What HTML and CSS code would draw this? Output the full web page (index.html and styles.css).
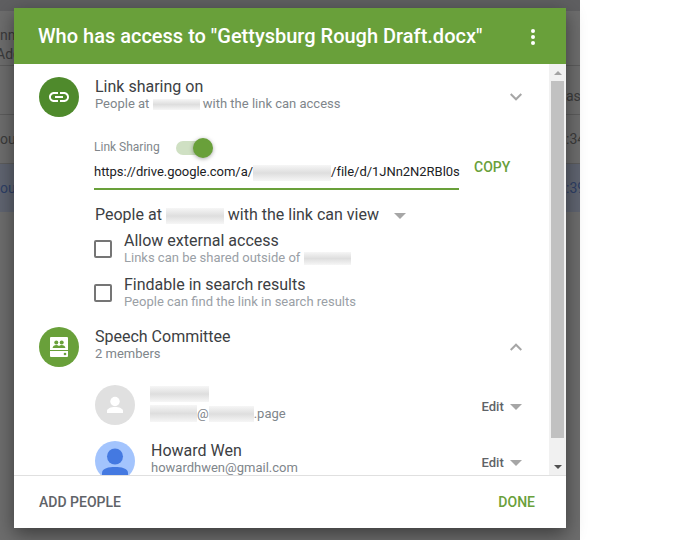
FILE: index.html
```html
<!DOCTYPE html>
<html lang="en">
<head>
    <meta charset="UTF-8">
    <title>Who has access</title>
    <link rel="stylesheet" href="styles.css">
</head>
<body>
    <div class="backdrop">
        <div class="back-top"></div>
        <div class="back-row back-first">
            <div class="back-left"><div>nnn</div><div class="back-add">Add</div></div>
        </div>
        <div class="back-row back-second">
            <div class="back-left"></div>
            <div class="back-right">as</div>
        </div>
        <div class="back-row">
            <div class="back-left">ough</div>
            <div class="back-right">:34</div>
        </div>
        <div class="back-row back-selected">
            <div class="back-left">ough</div>
            <div class="back-right">:39</div>
        </div>
    </div>

    <div class="dialog">
        <header class="dialog-head">
            <h1>Who has access to "Gettysburg Rough Draft.docx"</h1>
            <div class="dots"><i></i><i></i><i></i></div>
        </header>

        <div class="dialog-body">
            <div class="scroll-content">
                <div class="section-row">
                    <div class="avatar avatar-dark">
                        <svg width="24" height="24" viewBox="0 0 24 24" fill="#fff"><path d="M3.9 12c0-1.71 1.39-3.1 3.1-3.1h4V7H7c-2.76 0-5 2.24-5 5s2.24 5 5 5h4v-1.9H7c-1.71 0-3.1-1.39-3.1-3.1zM8 13h8v-2H8v2zm9-6h-4v1.9h4c1.71 0 3.1 1.39 3.1 3.1s-1.39 3.1-3.1 3.1h-4V17h4c2.76 0 5-2.24 5-5s-2.24-5-5-5z"/></svg>
                    </div>
                    <div class="row-text">
                        <div class="title">Link sharing on</div>
                        <div class="sub">People at <span class="smudge smudge-org"></span> with the link can access</div>
                    </div>
                    <svg class="chevron" width="12" height="8" viewBox="0 0 12 8"><path d="M.7 1L6 6.300 11.300 1" fill="none" stroke="#a6a6a6" stroke-width="2"/></svg>
                </div>

                <div class="link-box">
                    <div class="toggle-row">
                        <span class="toggle-label">Link Sharing</span>
                        <div class="toggle"><div class="toggle-knob"></div></div>
                    </div>
                    <div class="url-row">
                        <div class="url">https://drive.google.com/a/<span class="smudge smudge-url"></span>/file/d/1JNn2N2RBl0s</div>
                        <span class="copy">COPY</span>
                    </div>
                </div>

                <div class="scope">
                    People at <span class="smudge smudge-scope"></span> with the link can view
                    <span class="caret caret-scope"></span>
                </div>

                <div class="check-row">
                    <div class="checkbox"></div>
                    <div>
                        <div class="title">Allow external access</div>
                        <div class="sub sub-light">Links can be shared outside of <span class="smudge smudge-out"></span></div>
                    </div>
                </div>
                <div class="check-row">
                    <div class="checkbox"></div>
                    <div>
                        <div class="title">Findable in search results</div>
                        <div class="sub sub-light">People can find the link in search results</div>
                    </div>
                </div>

                <div class="section-row section-group">
                    <div class="avatar avatar-green">
                        <svg width="20" height="22" viewBox="0 0 20 22">
                            <path fill="#fff" d="M2 1h16a1 1 0 0 1 1 1v12H1V2a1 1 0 0 1 1-1zM1 15h18v5a1 1 0 0 1-1 1H2a1 1 0 0 1-1-1z"/>
                            <circle cx="7.300" cy="6.600" r="2" fill="#69a03a"/>
                            <circle cx="12.700" cy="6.600" r="2" fill="#69a03a"/>
                            <path fill="#69a03a" d="M3.600 12c0-2 2-3 3.700-3 1 0 1.900.3 2.700.9.8-.6 1.700-.9 2.700-.9 1.700 0 3.700 1 3.700 3z"/>
                            <circle cx="16" cy="18" r="1.300" fill="#69a03a"/>
                        </svg>
                    </div>
                    <div class="row-text">
                        <div class="title">Speech Committee</div>
                        <div class="sub">2 members</div>
                    </div>
                    <svg class="chevron" width="12" height="8" viewBox="0 0 12 8"><path d="M.7 7L6 1.700 11.300 7" fill="none" stroke="#a6a6a6" stroke-width="2"/></svg>
                </div>

                <div class="member member-first">
                    <div class="avatar avatar-grey">
                        <svg width="40" height="40" viewBox="0 0 40 40" fill="#fff">
                            <circle cx="20" cy="16.500" r="4.700"/>
                            <path d="M12 28v-2c0-2.500 4-4 8-4s8 1.500 8 4v2z"/>
                        </svg>
                    </div>
                    <div class="member-text">
                        <div class="smudge smudge-name"></div>
                        <div class="sub member-mail"><span class="smudge smudge-user"></span>@<span class="smudge smudge-domain"></span>.page</div>
                    </div>
                    <div class="edit">Edit <span class="caret"></span></div>
                </div>
                <div class="member">
                    <div class="avatar avatar-blue">
                        <svg width="40" height="40" viewBox="0 0 40 40" fill="#4479e1">
                            <circle cx="20" cy="15.500" r="8"/>
                            <path d="M7 40v-8c0-5 7-6 13-6s13 1 13 6v8z"/>
                        </svg>
                    </div>
                    <div class="member-text">
                        <div class="title">Howard Wen</div>
                        <div class="sub">howardhwen@gmail.com</div>
                    </div>
                    <div class="edit">Edit <span class="caret"></span></div>
                </div>
            </div>

            <div class="scrollbar">
                <div class="scroll-btn"><span class="arrow-up"></span></div>
                <div class="scroll-thumb"></div>
                <div class="scroll-btn scroll-btn-end"><span class="arrow-down"></span></div>
            </div>
        </div>

        <footer class="dialog-foot">
            <span class="btn-add">ADD PEOPLE</span>
            <span class="btn-done">DONE</span>
        </footer>
    </div>
</body>
</html>
```

FILE: styles.css
```css
body {
    margin: 0;
    padding: 0;
    background-color: #fff;
    font-family: Roboto, "Liberation Sans", sans-serif;
}

/* page behind the dialog */
.backdrop {
    width: 580px;
    height: 540px;
    background-color: #6d6d6d;
    color: #3b3b3b;
    font-size: 14px;
    overflow: hidden;
}

.back-top {
    height: 11px;
    background-color: #5f5f61;
}

.back-row {
    height: 48px;
    border-bottom: 1px solid #5c5c5c;
    display: flex;
    justify-content: space-between;
    align-items: center;
}

.back-first {
    height: 54px;
    align-items: flex-start;
    line-height: 19px;
}

.back-first .back-left {
    margin-top: 15px;
}

.back-add {
    margin-left: -4px;
}

.back-second {
    align-items: flex-end;
}

.back-second .back-right {
    margin-bottom: 10px;
}

.back-selected {
    background-color: #5f6470;
    border-bottom: none;
    color: #2e3f66;
}

.back-left,
.back-right {
    width: 14px;
    overflow: hidden;
    white-space: nowrap;
}

/* dialog */
.dialog {
    position: absolute;
    left: 14px;
    top: 8px;
    width: 552px;
    height: 520px;
    background-color: #fff;
    box-shadow: 0 6px 18px rgba(0, 0, 0, 0.45);
    display: flex;
    flex-direction: column;
}

.dialog-head {
    height: 56px;
    flex-shrink: 0;
    background-color: #69a03a;
    color: #fff;
    padding: 0 31px 0 24px;
    display: flex;
    justify-content: space-between;
    align-items: center;
}

.dialog-head h1 {
    margin: 0;
    font-size: 20px;
    font-weight: 500;
}

.dots {
    display: flex;
    flex-direction: column;
    gap: 2px;
    margin-top: 1px;
}

.dots i {
    width: 4px;
    height: 4px;
    border-radius: 50%;
    background-color: #fff;
}

.dialog-body {
    flex: 1;
    min-height: 0;
    display: flex;
    overflow: hidden;
}

.scroll-content {
    flex: 1;
    min-width: 0;
    padding: 13px 0 0 25px;
}

.scrollbar {
    width: 17px;
    flex-shrink: 0;
    background-color: #f1f1f1;
    display: flex;
    flex-direction: column;
}

.scroll-btn {
    height: 17px;
    display: flex;
    justify-content: center;
    align-items: center;
}

.scroll-btn-end {
    margin-top: auto;
}

.scroll-thumb {
    height: 357px;
    margin: 0 2px;
    background-color: #c1c1c1;
}

.arrow-up {
    border: 4px solid transparent;
    border-top: none;
    border-bottom: 4px solid #a3a3a3;
}

.arrow-down {
    border: 4px solid transparent;
    border-bottom: none;
    border-top: 4px solid #505050;
}

/* rows */
.section-row {
    height: 40px;
    display: flex;
    align-items: center;
}

.section-group {
    margin-top: 8px;
}

.avatar {
    width: 40px;
    height: 40px;
    flex-shrink: 0;
    border-radius: 50%;
    display: flex;
    justify-content: center;
    align-items: center;
    overflow: hidden;
}

.avatar-dark { background-color: #4f8a2c; }
.avatar-green { background-color: #69a03a; }
.avatar-grey { background-color: #e0e0e0; }
.avatar-blue { background-color: #a3c4fd; }

.row-text {
    flex: 1;
    align-self: flex-start;
    margin-left: 16px;
}

.chevron {
    margin-right: 27px;
}

.title {
    font-size: 16px;
    line-height: 19px;
    color: #3c4043;
}

.sub {
    font-size: 13px;
    line-height: 15px;
    color: #80868b;
}

.sub-light {
    color: #9aa0a6;
}

.smudge {
    display: inline-block;
    vertical-align: middle;
    background: linear-gradient(#f6f6f6, #dedede 50%, #f6f6f6);
}

.smudge-org { width: 47px; height: 11px; }
.smudge-url { width: 78px; height: 16px; }
.smudge-scope { width: 58px; height: 16px; }
.smudge-out { width: 47px; height: 13px; }
.smudge-name { display: block; width: 59px; height: 16px; }
.smudge-user { width: 47px; height: 17px; }
.smudge-domain { width: 45px; height: 16px; }

/* link sharing box */
.link-box {
    margin: 21px 0 0 55px;
}

.toggle-row {
    height: 20px;
    display: flex;
    align-items: center;
}

.toggle-label {
    font-size: 12px;
    color: #80868b;
    width: 82px;
    margin-top: -2px;
}

.toggle {
    position: relative;
    width: 26px;
    height: 14px;
    border-radius: 7px;
    background-color: #cfe0c3;
}

.toggle-knob {
    position: absolute;
    right: -11px;
    top: -3px;
    width: 20px;
    height: 20px;
    border-radius: 50%;
    background-color: #69a03a;
    box-shadow: 0 1px 4px rgba(0, 0, 0, 0.35);
}

.url-row {
    display: flex;
    align-items: center;
    margin-top: 6px;
}

.url {
    width: 365px;
    height: 24px;
    flex-shrink: 0;
    border-bottom: 2px solid #69a03a;
    font-size: 13px;
    letter-spacing: -0.03px;
    line-height: 15px;
    color: #202124;
    white-space: nowrap;
}

.copy {
    margin: -20px 0 0 15px;
    font-size: 14px;
    font-weight: 500;
    color: #69a03a;
}

.scope {
    margin: 15px 0 0 56px;
    height: 20px;
    font-size: 16px;
    line-height: 20px;
    color: #3c4043;
    white-space: nowrap;
}

.caret {
    display: inline-block;
    vertical-align: middle;
    margin-left: 3px;
    border: 6px solid transparent;
    border-bottom: none;
    border-top: 6px solid #a6a6a6;
}

.caret-scope {
    margin-left: 11px;
}

.check-row {
    margin: 0 0 0 55px;
    height: 44px;
    display: flex;
    align-items: flex-start;
}

.scope + .check-row {
    margin-top: 6px;
}

.checkbox {
    width: 14px;
    height: 14px;
    margin: 9px 12px 0 0;
    border: 2px solid #757575;
    border-radius: 2px;
}

/* members */
.member {
    margin: 16px 0 0 56px;
    height: 40px;
    display: flex;
    align-items: center;
}

.member-first {
    margin-top: 18px;
}

.member-text {
    flex: 1;
    align-self: flex-start;
    margin-left: 16px;
}

.member-first .member-text {
    margin: 1px 0 0 15px;
}

.member-mail {
    display: flex;
    align-items: center;
    margin-top: 2px;
    padding-top: 1px;
}

.edit {
    margin-right: 27px;
    padding-top: 2px;
    font-size: 13px;
    font-weight: 500;
    color: #5f6368;
    white-space: nowrap;
}

/* footer */
.dialog-foot {
    height: 52px;
    flex-shrink: 0;
    border-top: 1px solid #e0e0e0;
    padding: 0 31px 0 25px;
    display: flex;
    justify-content: space-between;
    align-items: center;
    font-size: 14px;
    font-weight: 500;
}

.btn-add {
    color: #5f6368;
}

.btn-done {
    color: #69a03a;
}
```
